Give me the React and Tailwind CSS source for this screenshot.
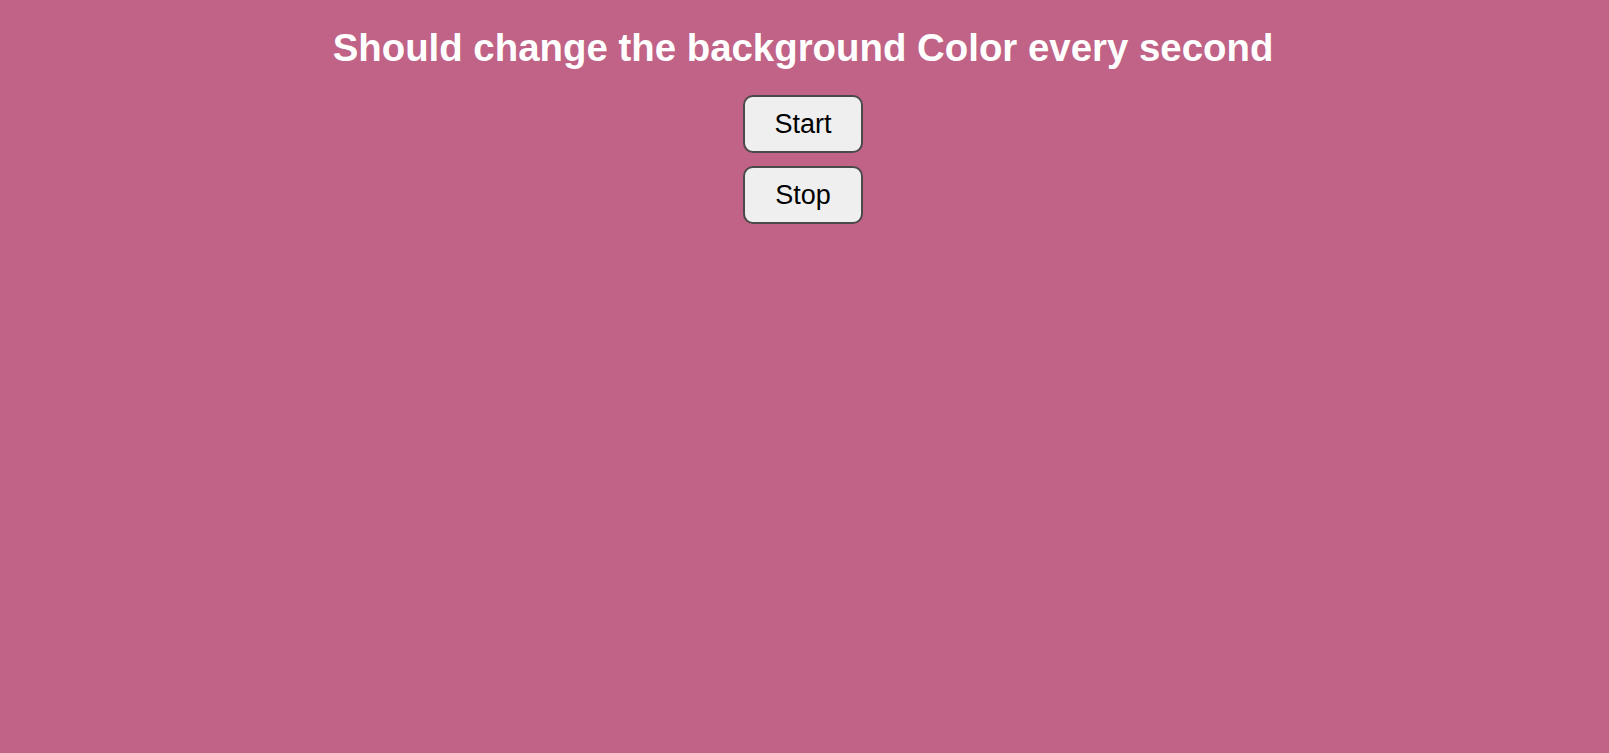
export default function App() {
  return (
    <div className="min-h-[753px] w-full bg-[#c06386] flex flex-col items-center pr-[3px]" style={{ fontFamily: '"Liberation Sans", Arial, sans-serif' }}>
      <h1 className="mt-[26px] text-[38.4px] leading-[44px] font-bold text-white" style={{ fontFamily: '"Liberation Sans", Arial, sans-serif' }}>
        Should change the background Color every second
      </h1>
      <div className="mt-[25px] flex flex-col items-center gap-[13px]">
        <button className="w-[120px] h-[58px] rounded-[10px] border-2 border-[#4a4a4a] bg-[#efefef] text-[27px] text-black">
          Start
        </button>
        <button className="w-[120px] h-[58px] rounded-[10px] border-2 border-[#4a4a4a] bg-[#efefef] text-[27px] text-black">
          Stop
        </button>
      </div>
    </div>
  );
}
